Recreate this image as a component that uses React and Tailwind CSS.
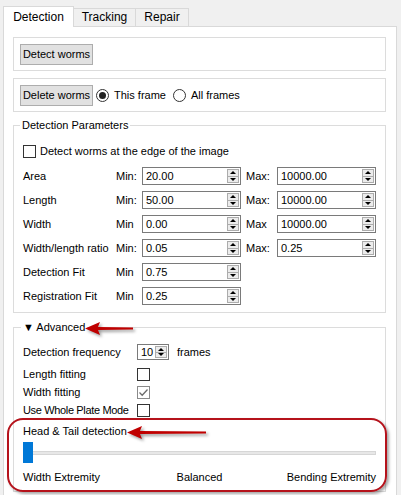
import React from "react";

function Arrows() {
  return (
    <div className="absolute right-[1px] top-[1px] bottom-[1px] w-[12px] flex flex-col border border-[#acacac] bg-[#ececec]">
      <div className="flex-1 flex items-center justify-center border-b border-[#acacac]">
        <div className="w-0 h-0 border-l-[3px] border-r-[3px] border-b-[3px] border-l-transparent border-r-transparent border-b-black" />
      </div>
      <div className="flex-1 flex items-center justify-center">
        <div className="w-0 h-0 border-l-[3px] border-r-[3px] border-t-[3px] border-l-transparent border-r-transparent border-t-black" />
      </div>
    </div>
  );
}

function Spin({ value }) {
  return (
    <div className="relative w-[99px] h-[18px] border border-[#7a7a7a] bg-white flex items-center pl-[3px] leading-none">
      {value}
      <Arrows />
    </div>
  );
}

function Check({ checked, gray }) {
  return (
    <div
      className={
        "w-[13px] h-[13px] bg-white border flex items-center justify-center " +
        (gray ? "border-[#8a8a8a]" : "border-[#333333]")
      }
    >
      {checked && (
        <svg width="11" height="11" viewBox="0 0 11 11">
          <path d="M1.5 5.5 L4.2 8.2 L9.5 2.5" fill="none" stroke="#6b6b6b" strokeWidth="1.3" />
        </svg>
      )}
    </div>
  );
}

function Radio({ checked }) {
  return (
    <div className="w-[13px] h-[13px] rounded-full border border-[#333333] bg-white flex items-center justify-center">
      {checked && <div className="w-[7px] h-[7px] rounded-full bg-[#222222]" />}
    </div>
  );
}

function Btn({ children }) {
  return (
    <div className="w-[73px] h-[21px] bg-[#e1e1e1] border border-[#adadad] flex items-center justify-center leading-none whitespace-nowrap">
      {children}
    </div>
  );
}

function Row({ label, min, max, colon }) {
  return (
    <div className="flex items-center h-[18px]">
      <span className="w-[93px] whitespace-nowrap">{label}</span>
      <span className="w-[26px]">{colon ? "Min:" : "Min"}</span>
      <Spin value={min} />
      {max !== undefined && (
        <>
          <span className="ml-[5px] w-[31px]">{colon ? "Max:" : "Max"}</span>
          <Spin value={max} />
        </>
      )}
    </div>
  );
}

function RedArrow({ className, length }) {
  const h = 13;
  const head = 15;
  const t = 3;
  const pts = `0,${h / 2} ${head},0 ${head - 2},${h / 2 - t / 2} ${length},${h / 2 - t / 2 + 0.5} ${length},${h / 2 + t / 2 - 0.5} ${head - 2},${h / 2 + t / 2} ${head},${h}`;
  return (
    <svg
      className={"absolute drop-shadow-[2px_2px_1.5px_rgba(0,0,0,0.4)] " + className}
      width={length + 2}
      height={h + 2}
      viewBox={`0 0 ${length + 2} ${h + 2}`}
    >
      <polygon points={pts} fill="#c00000" />
    </svg>
  );
}

export default function App() {
  return (
    <div className="relative w-[401px] h-[495px] overflow-hidden bg-[#f0f0f0] text-[11px] leading-[15px] text-black font-['Liberation_Sans',Arial,sans-serif]">
      {/* Tabs */}
      <div className="flex items-end pl-[3px] h-[26px] text-[12px]">
        <div className="relative z-10 w-[71px] h-[21px] mb-[-1px] bg-white border border-b-0 border-[#d9d9d9] flex items-center justify-center">
          Detection
        </div>
        <div className="w-[63px] h-[18px] -ml-[1px] bg-[#f0f0f0] border border-b-0 border-[#d9d9d9] flex items-center justify-center">
          Tracking
        </div>
        <div className="w-[54px] h-[18px] -ml-[1px] bg-[#f0f0f0] border border-b-0 border-[#d9d9d9] flex items-center justify-center">
          Repair
        </div>
      </div>

      {/* Pane */}
      <div className="ml-[3px] w-[394px] h-[480px] bg-white border border-[#d9d9d9] pl-[9px] pt-[10px]">
        {/* Group 1 */}
        <div className="w-[373px] h-[34px] border border-[#dcdcdc] pl-[6px] flex items-center">
          <Btn>Detect worms</Btn>
        </div>

        {/* Group 2 */}
        <div className="mt-[7px] w-[373px] h-[34px] border border-[#dcdcdc] pl-[6px] flex items-center">
          <Btn>Delete worms</Btn>
          <div className="ml-[3px]">
            <Radio checked />
          </div>
          <span className="ml-[5px]">This frame</span>
          <div className="ml-[7px]">
            <Radio />
          </div>
          <span className="ml-[5px]">All frames</span>
        </div>

        {/* Detection Parameters */}
        <div className="mt-[13px] w-[373px] border border-[#dcdcdc] pl-[9px] pb-[7px]">
          <div className="-mt-[8px] -ml-[3px] px-[2px] bg-white w-fit">Detection Parameters</div>
          <div className="mt-[12px] flex items-center h-[13px]">
            <Check />
            <span className="ml-[4px]">Detect worms at the edge of the image</span>
          </div>
          <div className="mt-[9px] flex flex-col gap-[6px]">
            <Row label="Area" min="20.00" max="10000.00" colon />
            <Row label="Length" min="50.00" max="10000.00" colon />
            <Row label="Width" min="0.00" max="10000.00" />
            <Row label="Width/length ratio" min="0.05" max="0.25" colon />
            <Row label="Detection Fit" min="0.75" />
            <Row label="Registration Fit" min="0.25" />
          </div>
        </div>

        {/* Advanced */}
        <div className="mt-[14px] w-[373px] h-[165px] border border-[#dcdcdc] pl-[9px]">
          <div className="-mt-[8px] -ml-[2px] px-[2px] bg-white w-fit">▼ Advanced</div>
          <div className="mt-[9px] flex items-center h-[16px]">
            <span className="w-[114px]">Detection frequency</span>
            <div className="relative w-[32px] h-[16px] border border-[#7a7a7a] bg-white flex items-center pl-[3px] leading-none">
              10
              <Arrows />
            </div>
            <span className="ml-[8px]">frames</span>
          </div>
          <div className="mt-[8px] flex flex-col gap-[5px]">
            <div className="flex items-center h-[13px]">
              <span className="w-[114px]">Length fitting</span>
              <Check />
            </div>
            <div className="flex items-center h-[13px]">
              <span className="w-[114px]">Width fitting</span>
              <Check checked gray />
            </div>
            <div className="flex items-center h-[13px]">
              <span className="w-[114px] whitespace-nowrap tracking-[-0.35px]">Use Whole Plate Mode</span>
              <Check />
            </div>
          </div>
          <div className="mt-[7px]">Head &amp; Tail detection</div>
          <div className="mt-[3px] relative w-[353px] h-[21px] flex items-center">
            <div className="w-full h-[4px] bg-[#e7e7e7] border border-[#d6d6d6]" />
            <div className="absolute left-0 top-0 w-[10px] h-[21px] bg-[#0078d7]" />
          </div>
          <div className="mt-[7px] w-[353px] grid grid-cols-3">
            <span className="text-left whitespace-nowrap">Width Extremity</span>
            <span className="text-center">Balanced</span>
            <span className="text-right whitespace-nowrap">Bending Extremity</span>
          </div>
        </div>
      </div>

      {/* Annotations */}
      <div className="absolute left-[7px] top-[418px] w-[380px] h-[74px] rounded-[16px] border-2 border-[#b5121b] shadow-[2px_2px_3px_rgba(0,0,0,0.35)]" />
      <RedArrow className="left-[85px] top-[322px]" length={48} />
      <RedArrow className="left-[127px] top-[426px]" length={79} />
    </div>
  );
}
